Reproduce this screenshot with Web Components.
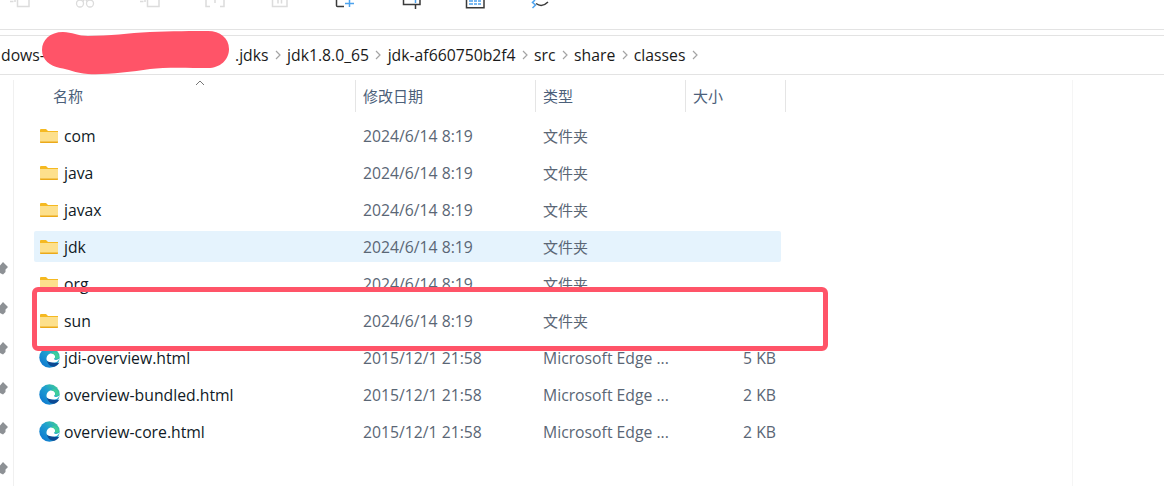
<!DOCTYPE html>
<html>
<head>
<meta charset="utf-8">
<style>
  html, body { margin: 0; padding: 0; background: #fff; }
  body { width: 1164px; height: 486px; overflow: hidden; font-family: "Open Sans", "Noto Sans CJK SC", sans-serif; position: relative; }
</style>
</head>
<body>
<file-window></file-window>
<script>
const FOLDER = `<svg width="19" height="15" viewBox="0 0 19 15"><path d="M0 2a1 1 0 0 1 1-1h5l2 2h10v11a1 1 0 0 1-1 1H1a1 1 0 0 1-1-1z" fill="#f5b921"/><path d="M0 4h18v10a1 1 0 0 1-1 1H1a1 1 0 0 1-1-1z" fill="#fde08c"/><path d="M0 13.600h18V14a1 1 0 0 1-1 1H1a1 1 0 0 1-1-1z" fill="#eba91a"/></svg>`;

let edgeCount = 0;
function edgeIcon() {
  edgeCount++;
  const a = 'a' + edgeCount;
  return `<svg width="21" height="21" viewBox="0 0 21 21">
    <defs><linearGradient id="${a}" x1="0" y1="1" x2="1" y2="0"><stop offset="0" stop-color="#0a6fd0"/><stop offset=".55" stop-color="#1f9fd0"/><stop offset="1" stop-color="#46d68a"/></linearGradient></defs>
    <circle cx="10.500" cy="10.500" r="10.200" fill="url(#${a})"/>
    <path d="M8 12.500c0 3.500 2.500 7.800 7.500 7.200 2.300-.8 4-2.300 5-4.200-3 1.200-6.500.5-8.300-1.700-1.100-1.300-1.300-2.700-1.200-4z" fill="#0b4a94"/>
    <path d="M7.500 12.300c-.2-3.200 2-5.800 4.700-5.800 2.300 0 3.900 1.600 3.900 3.300 0 1-.6 1.500-.9 1.900-.3.500.4 1.200 1.700 1.200 1.800 0 3.300-.8 3.700-2.100-.7 3.500-3.300 4.800-5.900 4.800-3.800 0-7-1.100-7.200-3.300z" fill="#fff"/>
    <path d="M12.500 6.500c2.300 0 3.800 1.500 3.800 3.200 0 1-.5 1.500-.8 2 1.500.4 3.400.1 4.600-1-.1-3.300-2.400-5.500-5.100-5.500-1.200 0-2 .5-2.500 1.300z" fill="#3ecf9a"/>
  </svg>`;
}

class ToolIcon extends HTMLElement {
  constructor() {
    super();
    this.attachShadow({ mode: 'open' });
    const kind = this.getAttribute('kind');
    const g = '#dcdcdc';
    const dark = '#3a3a3a';
    const blue = '#4da3ee';
    const line = (d, c) => `<path d="${d}" fill="none" stroke="${c}" stroke-width="1.500"/>`;
    const shapes = {
      copy: line('M7.500 -1V6.500H19V-1', g) + line('M0 1.500h3.500M5 0v2', g),
      cut: line('M8 1.500L10 -2M12 1.500L10 -2', g) + `<circle cx="5" cy="3.500" r="3.500" fill="none" stroke="${g}" stroke-width="1.300"/><circle cx="15" cy="3.500" r="3.500" fill="none" stroke="${g}" stroke-width="1.300"/>`,
      frame: line('M1 -1V6.500H5M19 -1V6.500H15M10 0V3', g),
      trash: line('M2.500 -1V6.500H17V-1M8 0V3.500M11.500 0V3.500', g),
      newfolder: line('M1.500 -1V5.500a1 1 0 0 0 1 1H9', dark) + line('M14.500 0V7M10 3.500H19', blue),
      props: line('M3.500 -1V4.500H20V-1M15.500 4.500V9', dark) + line('M15.500 0V3', blue),
      calendar: line('M1.500 -1V7.800H19V-1', dark) + `<path d="M4 1h4M9 1h3M13 1h3M4 4h4M9 4h3M13 4h3" stroke="${blue}" stroke-width="1.600"/>`,
      share: line('M5 0L2.500 2.500 5.500 5 2.500 8', blue) + line('M6 3.500Q12 8 18 2', dark)
    };
    this.shadowRoot.innerHTML = `<style>:host{display:block;flex:none;width:22px;height:10px}svg{display:block;overflow:visible}</style>
      <svg width="22" height="10" viewBox="0 0 22 10">${shapes[kind]}</svg>`;
  }
}
customElements.define('tool-icon', ToolIcon);

class AppToolbar extends HTMLElement {
  constructor() {
    super();
    this.attachShadow({ mode: 'open' });
    this.shadowRoot.innerHTML = `<style>
      :host{display:flex;gap:43px;box-sizing:border-box;height:30px;border-bottom:1px solid #e3e3e3;padding-left:10px;overflow:hidden;align-items:flex-start}
    </style><slot></slot>`;
  }
}
customElements.define('app-toolbar', AppToolbar);

class AddressBar extends HTMLElement {
  constructor() {
    super();
    this.attachShadow({ mode: 'open' });
    const parts = ['.jdks', 'jdk1.8.0_65', 'jdk-af660750b2f4', 'src', 'share', 'classes'];
    const chev = `<svg width="6" height="10" viewBox="0 0 6 10"><path d="M1 1l4 4-4 4" fill="none" stroke="#a4a4a4" stroke-width="1.200"/></svg>`;
    const html = parts.map(p => `<span>${p}</span>${chev}`).join('');
    this.shadowRoot.innerHTML = `<style>
      :host{display:flex;box-sizing:border-box;height:40px;margin-top:5px;border-top:1px solid #e3e3e3;border-bottom:1px solid #e3e3e3;align-items:center;font-size:15.750px;color:#1a1a1a;white-space:nowrap;padding-left:1px}
      .start{width:234px;flex:none}
      span{flex:none}
      svg{flex:none;margin:0 6.250px}
    </style><span class="start">dows-</span>${html}`;
  }
}
customElements.define('address-bar', AddressBar);

class ColHeader extends HTMLElement {
  constructor() {
    super();
    this.attachShadow({ mode: 'open' });
    this.shadowRoot.innerHTML = `<style>
      :host{display:grid;grid-template-columns:322px 180px 150px 100px;height:32px;margin-left:34px;font-size:15px;color:#4c607a;position:relative}
      div{box-sizing:border-box;border-right:1px solid #e5e5e5;display:flex;align-items:center;padding:0 0 2px 7px}
      div:first-of-type{padding-left:19px}
      .sort{position:absolute;left:161px;top:0}
    </style><div>名称</div><div>修改日期</div><div>类型</div><div>大小</div>
    <svg class="sort" width="10" height="6" viewBox="0 0 10 6"><path d="M1 5l4-4 4 4" fill="none" stroke="#777" stroke-width="1"/></svg>`;
  }
}
customElements.define('col-header', ColHeader);

class FileRow extends HTMLElement {
  constructor() {
    super();
    this.attachShadow({ mode: 'open' });
    const isFolder = this.getAttribute('icon') === 'folder';
    this.shadowRoot.innerHTML = `<style>
      :host{display:grid;grid-template-columns:322px 180px 150px 95px;height:31px;margin-bottom:6px;align-items:center;border-radius:2px;font-size:15.750px;color:#5a6675}
      :host([selected]){background:#e5f3fd}
      .name{display:flex;align-items:center;color:#101a26;padding-left:${isFolder ? 6 : 5}px}
      .icon{width:${isFolder ? 24 : 25}px;display:flex;flex:none}
      .cell{padding-left:7px;white-space:nowrap}
      .cjk{font-size:15px}
      .size{text-align:right;padding-right:5px}
    </style>
    <div class="name"><span class="icon">${isFolder ? FOLDER : edgeIcon()}</span><slot></slot></div>
    <div class="cell">${this.getAttribute('date')}</div>
    <div class="cell ${isFolder ? 'cjk' : ''}">${this.getAttribute('type')}</div>
    <div class="cell size">${this.getAttribute('size') || ''}</div>`;
  }
}
customElements.define('file-row', FileRow);

class PinRail extends HTMLElement {
  constructor() {
    super();
    this.attachShadow({ mode: 'open' });
    const pin = `<svg width="8" height="13" viewBox="0 0 8 13"><path d="M0 3.500L3 0 8 5 5.500 7.500V10L3 12.500 0 11z" fill="#8d9195"/></svg>`;
    this.shadowRoot.innerHTML = `<style>
      :host{position:absolute;left:0;top:80px;bottom:0;width:14px;border-right:1px solid #f0f0f0;box-sizing:border-box;display:flex;flex-direction:column;gap:27px;padding-top:182px}
      svg{display:block;flex:none}
    </style>${pin.repeat(6)}`;
  }
}
customElements.define('pin-rail', PinRail);

class RedMark extends HTMLElement {
  constructor() {
    super();
    this.attachShadow({ mode: 'open' });
    this.shadowRoot.innerHTML = `<style>
      :host{position:absolute;left:32px;top:287px;width:796px;height:64px;box-sizing:border-box;border:5px solid #ff5468;border-radius:6px;pointer-events:none}
    </style>`;
  }
}
customElements.define('red-mark', RedMark);

class RedBlob extends HTMLElement {
  constructor() {
    super();
    this.attachShadow({ mode: 'open' });
    this.shadowRoot.innerHTML = `<style>:host{position:absolute;left:42px;top:30px;line-height:0}</style>
    <svg width="188" height="46" viewBox="42 30 188 46"><path d="M63 32C72 32 78 36 88 36 110 36 128 33 150 32 170 31 195 31 208 31 220 31 229 38 229 49 229 60 220 68 208 68 190 68 165 67 150 69 130 72 105 75 88 74 75 73 68 69 60 68 50 66 42 60 42 50 42 40 50 32 63 32z" fill="#ff5468"/></svg>`;
  }
}
customElements.define('red-blob', RedBlob);

class FileWindow extends HTMLElement {
  constructor() {
    super();
    this.attachShadow({ mode: 'open' });
    const icons = ['copy', 'cut', 'copy', 'frame', 'trash', 'newfolder', 'props', 'calendar', 'share'];
    this.shadowRoot.innerHTML = `<style>
      :host{display:block;width:1164px;height:486px;position:relative;overflow:hidden}
      .main{width:1073px;height:406px;margin-top:5px;box-sizing:border-box;border-right:1px solid #f5f5f5;padding-left:34px}
      col-header{margin-left:0}
      .rows{margin-top:8px;width:747px}
    </style>
    <app-toolbar>${icons.map(i => `<tool-icon kind="${i}"></tool-icon>`).join('')}</app-toolbar>
    <address-bar></address-bar>
    <div class="main">
      <col-header></col-header>
      <div class="rows">
        <file-row icon="folder" date="2024/6/14 8:19" type="文件夹">com</file-row>
        <file-row icon="folder" date="2024/6/14 8:19" type="文件夹">java</file-row>
        <file-row icon="folder" date="2024/6/14 8:19" type="文件夹">javax</file-row>
        <file-row icon="folder" date="2024/6/14 8:19" type="文件夹" selected>jdk</file-row>
        <file-row icon="folder" date="2024/6/14 8:19" type="文件夹">org</file-row>
        <file-row icon="folder" date="2024/6/14 8:19" type="文件夹">sun</file-row>
        <file-row icon="edge" date="2015/12/1 21:58" type="Microsoft Edge ..." size="5 KB">jdi-overview.html</file-row>
        <file-row icon="edge" date="2015/12/1 21:58" type="Microsoft Edge ..." size="2 KB">overview-bundled.html</file-row>
        <file-row icon="edge" date="2015/12/1 21:58" type="Microsoft Edge ..." size="2 KB">overview-core.html</file-row>
      </div>
    </div>
    <pin-rail></pin-rail>
    <red-blob></red-blob>
    <red-mark></red-mark>`;
  }
}
customElements.define('file-window', FileWindow);
</script>
</body>
</html>
